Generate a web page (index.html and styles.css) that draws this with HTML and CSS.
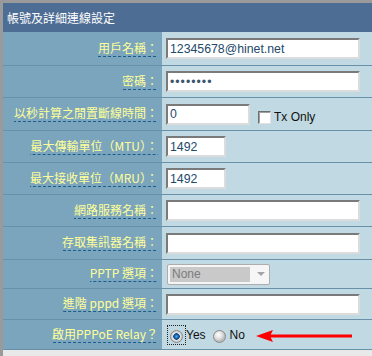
FILE: index.html
```html
<!DOCTYPE html>
<html>
<head>
<meta charset="utf-8">
<link rel="stylesheet" href="styles.css">
</head>
<body>
<div class="panel">
  <div class="head">帳號及詳細連線設定</div>
  <div class="row h34">
    <div class="lab"><span>用戶名稱：</span></div>
    <div class="val"><input class="txt w-long" type="text" value="12345678@hinet.net"></div>
  </div>
  <div class="row h32">
    <div class="lab"><span>密碼：</span></div>
    <div class="val"><input class="txt w-long pw" type="password" value="12345678"></div>
  </div>
  <div class="row h33">
    <div class="lab"><span>以秒計算之閒置斷線時間：</span></div>
    <div class="val">
      <input class="txt w-idle" type="text" value="0">
      <span class="check"></span>
      <span class="opt">Tx Only</span>
    </div>
  </div>
  <div class="row h32">
    <div class="lab"><span>最大傳輸單位（MTU）：</span></div>
    <div class="val"><input class="txt w-short" type="text" value="1492"></div>
  </div>
  <div class="row h32">
    <div class="lab"><span>最大接收單位（MRU）：</span></div>
    <div class="val"><input class="txt w-short" type="text" value="1492"></div>
  </div>
  <div class="row h32">
    <div class="lab"><span>網路服務名稱：</span></div>
    <div class="val"><input class="txt w-long" type="text" value=""></div>
  </div>
  <div class="row h33">
    <div class="lab"><span>存取集訊器名稱：</span></div>
    <div class="val"><input class="txt w-long" type="text" value=""></div>
  </div>
  <div class="row h29">
    <div class="lab"><span>PPTP 選項：</span></div>
    <div class="val">
      <div class="sel"><span class="sel-text">None</span><span class="sel-arrow"></span></div>
    </div>
  </div>
  <div class="row h31">
    <div class="lab"><span>進階 pppd 選項：</span></div>
    <div class="val"><input class="txt w-long" type="text" value=""></div>
  </div>
  <div class="row h30">
    <div class="lab"><span>啟用PPPoE Relay？</span></div>
    <div class="val">
      <span class="focus"><span class="radio on"></span></span>
      <span class="opt yes">Yes</span>
      <span class="radio off"></span>
      <span class="opt no">No</span>
      <svg class="arrow" width="96" height="12" viewBox="0 0 96 12">
        <polygon points="0,6 17,0 14,6 17,12" fill="#ff0000"/>
        <rect x="13" y="4.5" width="83" height="3" fill="#ff0000"/>
      </svg>
    </div>
  </div>
</div>
</body>
</html>
```
FILE: styles.css
```css
html, body {
  margin: 0;
  padding: 0;
}
body {
  width: 372px;
  height: 356px;
  overflow: hidden;
  background: #e9e9e9;
  font-family: "Liberation Sans", Arial, sans-serif;
}
.panel {
  border-top: 3px solid #9a9a9a;
  border-left: 3px solid #9a9a9a;
  display: flex;
  flex-direction: column;
  min-height: 353px;
}
.head {
  height: 29px;
  background: #4e6d94;
  color: #ffffff;
  font: 12px/14px "Noto Sans CJK TC", sans-serif;
  display: flex;
  align-items: center;
  padding-left: 4px;
}
.row {
  display: grid;
  grid-template-columns: 159px 1fr;
  border-bottom: 1px solid #6890a8;
  box-sizing: border-box;
}
.h34 { height: 34px; }
.h33 { height: 33px; }
.h32 { height: 32px; }
.h31 { height: 31px; }
.h30 { height: 30px; }
.h29 { height: 29px; }
.lab {
  background: #7ba5bd;
  display: flex;
  justify-content: flex-end;
  align-items: center;
  padding-right: 4px;
}
.lab span {
  font: 12px/14px "Noto Sans CJK TC", sans-serif;
  color: #ffff99;
  padding-bottom: 2px;
  white-space: nowrap;
  background-image: linear-gradient(to right, #1b5c8c 3px, transparent 3px);
  background-size: 5px 1px;
  background-repeat: repeat-x;
  background-position: right bottom;
}
.val {
  background: #c1d9e2;
  display: flex;
  align-items: center;
  padding-left: 4px;
}
.txt {
  box-sizing: border-box;
  height: 21px;
  margin: 0;
  border: 2px solid;
  border-color: #7a7a7a #dcdcdc #dcdcdc #7a7a7a;
  background: #ffffff;
  color: #23496b;
  font: 12.3px "Liberation Sans", Arial, sans-serif;
  padding: 0 2px;
  outline: none;
}
.pw {
  letter-spacing: 1px;
  color: #3a556f;
}
.w-long { width: 194px; }
.w-idle { width: 84px; }
.w-short { width: 60px; }
.check {
  box-sizing: border-box;
  width: 13px;
  height: 13px;
  margin-left: 8px;
  margin-top: 6px;
  border: 1px solid;
  border-color: #6e6e6e #e2e2e2 #e2e2e2 #6e6e6e;
  box-shadow: inset 1px 1px 0 #a0a0a0;
  background: #ffffff;
}
.opt {
  font: 12px "Liberation Sans", Arial, sans-serif;
  color: #111111;
}
.check + .opt {
  margin-left: 3px;
  margin-top: 5px;
}
.sel {
  box-sizing: border-box;
  width: 103px;
  height: 21px;
  margin-left: 1px;
  border: 1px solid #adadad;
  border-radius: 2px;
  background: #f6f6f6;
  display: flex;
  align-items: center;
  padding-left: 2px;
}
.sel-text {
  width: 80px;
  height: 15px;
  background: #c9c9c9;
  color: #7c7c7c;
  font: 12px/15px "Liberation Sans", Arial, sans-serif;
  padding-left: 2px;
  box-sizing: border-box;
}
.sel-arrow {
  width: 0;
  height: 0;
  margin-left: 7px;
  border-left: 4px solid transparent;
  border-right: 4px solid transparent;
  border-top: 4px solid #a4a4a4;
}
.focus {
  box-sizing: border-box;
  width: 19px;
  height: 20px;
  margin-left: 1px;
  border: 1px dotted #222222;
  display: flex;
  justify-content: center;
  align-items: center;
  padding-top: 3px;
}
.radio {
  box-sizing: border-box;
  width: 13px;
  height: 13px;
  border-radius: 50%;
  border: 1px solid #8a8a8a;
}
.radio.on {
  background: radial-gradient(circle at 50% 50%, #5fa8e0 0, #1660a8 2px, #0d4a88 3px, #e8e8e8 3.6px, #cfcfcf 5px, #bdbdbd 6px);
}
.radio.off {
  margin-left: 7px;
  margin-top: 3px;
  background: radial-gradient(circle at 40% 35%, #ffffff 0, #f0f0f0 2px, #d2d2d2 5px, #bcbcbc 6px);
}
.opt.yes {
  margin-left: 0;
}
.opt.no {
  margin-left: 4px;
}
.arrow {
  display: block;
  margin-left: 11px;
  margin-top: 2px;
}
```
